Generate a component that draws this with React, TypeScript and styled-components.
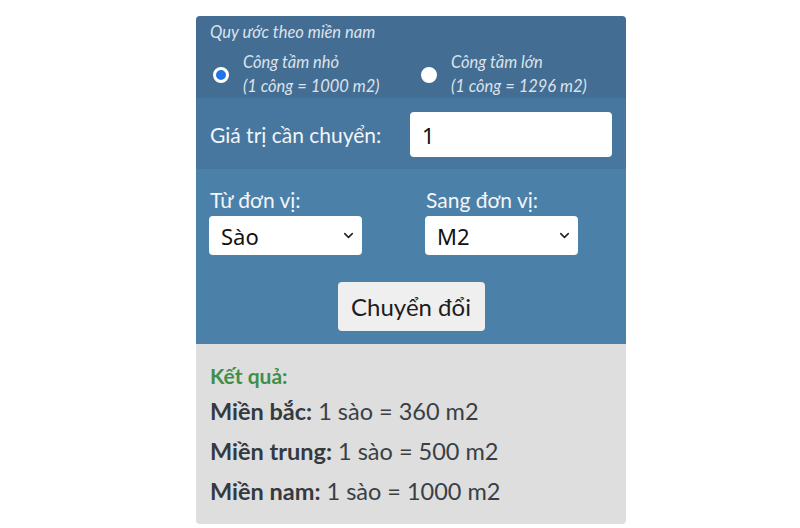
import React, { useState } from 'react';
import styled, { createGlobalStyle } from 'styled-components';
import { ChevronDown } from 'lucide-react';

const GlobalStyle = createGlobalStyle`
  body {
    margin: 0;
    background: #ffffff;
    font-family: Lato, "Noto Sans", sans-serif;
  }
`;

const Card = styled.div`
  width: 430px;
  margin: 16px 0 0 196px;
  border-radius: 4px;
  overflow: hidden;
  background: #dedede;
`;

const Header = styled.div`
  background: #436d92;
  padding: 6px 14px 0;
  color: #dbe3ec;
  font-style: italic;
  font-size: 16.5px;
`;

const Caption = styled.div`
  line-height: 20px;
  font-size: 16.5px;
`;

const RadioRow = styled.div`
  display: grid;
  grid-template-columns: 208px 1fr;
  margin-top: 8px;
`;

const RadioOption = styled.label`
  display: flex;
  align-items: center;
  gap: 14px;
  cursor: pointer;
`;

const Radio = styled.input`
  appearance: none;
  margin: 2px 0 0 3px;
  width: 16px;
  height: 16px;
  border-radius: 50%;
  background: #ffffff;
  border: 2px solid #ffffff;
  flex-shrink: 0;
  &:checked {
    background: #1f74e6;
    border: 3px solid #ffffff;
  }
`;

const RadioText = styled.div`
  line-height: 24px;
`;

const InputRow = styled.div`
  background: #47779f;
  padding: 14px 14px 12px;
  display: flex;
  align-items: center;
  justify-content: space-between;
`;

const RowLabel = styled.span`
  color: #f2f5f8;
  font-size: 21px;
`;

const ValueInput = styled.input`
  width: 202px;
  height: 45px;
  box-sizing: border-box;
  border: none;
  border-radius: 4px;
  padding: 0 12px;
  font-family: "Noto Sans", sans-serif;
  font-size: 22px;
  color: #111;
  outline: none;
`;

const Converter = styled.div`
  background: #4b80a9;
  padding: 19px 14px 13px 13px;
  display: flex;
  flex-direction: column;
`;

const UnitGrid = styled.div`
  display: grid;
  grid-template-columns: 216px 1fr;
`;

const UnitField = styled.div`
  display: flex;
  flex-direction: column;
  gap: 4px;
`;

const UnitLabel = styled.span`
  color: #f2f5f8;
  font-size: 21px;
  line-height: 24px;
  padding-left: 1px;
`;

const SelectWrap = styled.div`
  position: relative;
  width: 153px;
`;

const Select = styled.select`
  appearance: none;
  width: 100%;
  height: 39px;
  border: none;
  border-radius: 4px;
  background: #ffffff;
  padding: 0 12px;
  font-family: "Noto Sans", sans-serif;
  font-size: 22px;
  color: #111;
  outline: none;
`;

const Chevron = styled(ChevronDown)`
  position: absolute;
  right: 6px;
  top: 12px;
  pointer-events: none;
  color: #222;
`;

const ConvertButton = styled.button`
  align-self: center;
  margin-top: 27px;
  margin-left: 1px;
  width: 147px;
  height: 49px;
  border: none;
  border-radius: 4px;
  background: #efefef;
  font-family: Lato, sans-serif;
  font-size: 24px;
  color: #1d1d1d;
  cursor: pointer;
`;

const Result = styled.div`
  padding: 17px 14px 13px;
  color: #3a3f45;
`;

const ResultTitle = styled.div`
  color: #3f8f4c;
  font-weight: 700;
  font-size: 21px;
  line-height: 30px;
`;

const ResultLine = styled.div`
  font-size: 23.5px;
  line-height: 40px;
  b {
    font-weight: 700;
    color: #343a40;
  }
`;

const units = ['Sào', 'M2', 'Mẫu', 'Công', 'Hecta'];

const results = [
  { region: 'Miền bắc:', value: '1 sào = 360 m2' },
  { region: 'Miền trung:', value: '1 sào = 500 m2' },
  { region: 'Miền nam:', value: '1 sào = 1000 m2' },
];

export default function App() {
  const [cong, setCong] = useState('small');
  const [value, setValue] = useState('1');
  const [from, setFrom] = useState('Sào');
  const [to, setTo] = useState('M2');

  return (
    <>
      <GlobalStyle />
      <Card>
        <Header>
          <Caption>Quy ước theo miền nam</Caption>
          <RadioRow>
            <RadioOption>
              <Radio
                type="radio"
                name="cong"
                checked={cong === 'small'}
                onChange={() => setCong('small')}
              />
              <RadioText>
                Công tầm nhỏ
                <br />
                (1 công = 1000 m2)
              </RadioText>
            </RadioOption>
            <RadioOption>
              <Radio
                type="radio"
                name="cong"
                checked={cong === 'large'}
                onChange={() => setCong('large')}
              />
              <RadioText>
                Công tầm lớn
                <br />
                (1 công = 1296 m2)
              </RadioText>
            </RadioOption>
          </RadioRow>
        </Header>

        <InputRow>
          <RowLabel>Giá trị cần chuyển:</RowLabel>
          <ValueInput value={value} onChange={(e) => setValue(e.target.value)} />
        </InputRow>

        <Converter>
          <UnitGrid>
            <UnitField>
              <UnitLabel>Từ đơn vị:</UnitLabel>
              <SelectWrap>
                <Select value={from} onChange={(e) => setFrom(e.target.value)}>
                  {units.map((u) => (
                    <option key={u}>{u}</option>
                  ))}
                </Select>
                <Chevron size={15} strokeWidth={2.5} />
              </SelectWrap>
            </UnitField>
            <UnitField>
              <UnitLabel>Sang đơn vị:</UnitLabel>
              <SelectWrap>
                <Select value={to} onChange={(e) => setTo(e.target.value)}>
                  {units.map((u) => (
                    <option key={u}>{u}</option>
                  ))}
                </Select>
                <Chevron size={15} strokeWidth={2.5} />
              </SelectWrap>
            </UnitField>
          </UnitGrid>
          <ConvertButton>Chuyển đổi</ConvertButton>
        </Converter>

        <Result>
          <ResultTitle>Kết quả:</ResultTitle>
          {results.map((r) => (
            <ResultLine key={r.region}>
              <b>{r.region}</b> {r.value}
            </ResultLine>
          ))}
        </Result>
      </Card>
    </>
  );
}
